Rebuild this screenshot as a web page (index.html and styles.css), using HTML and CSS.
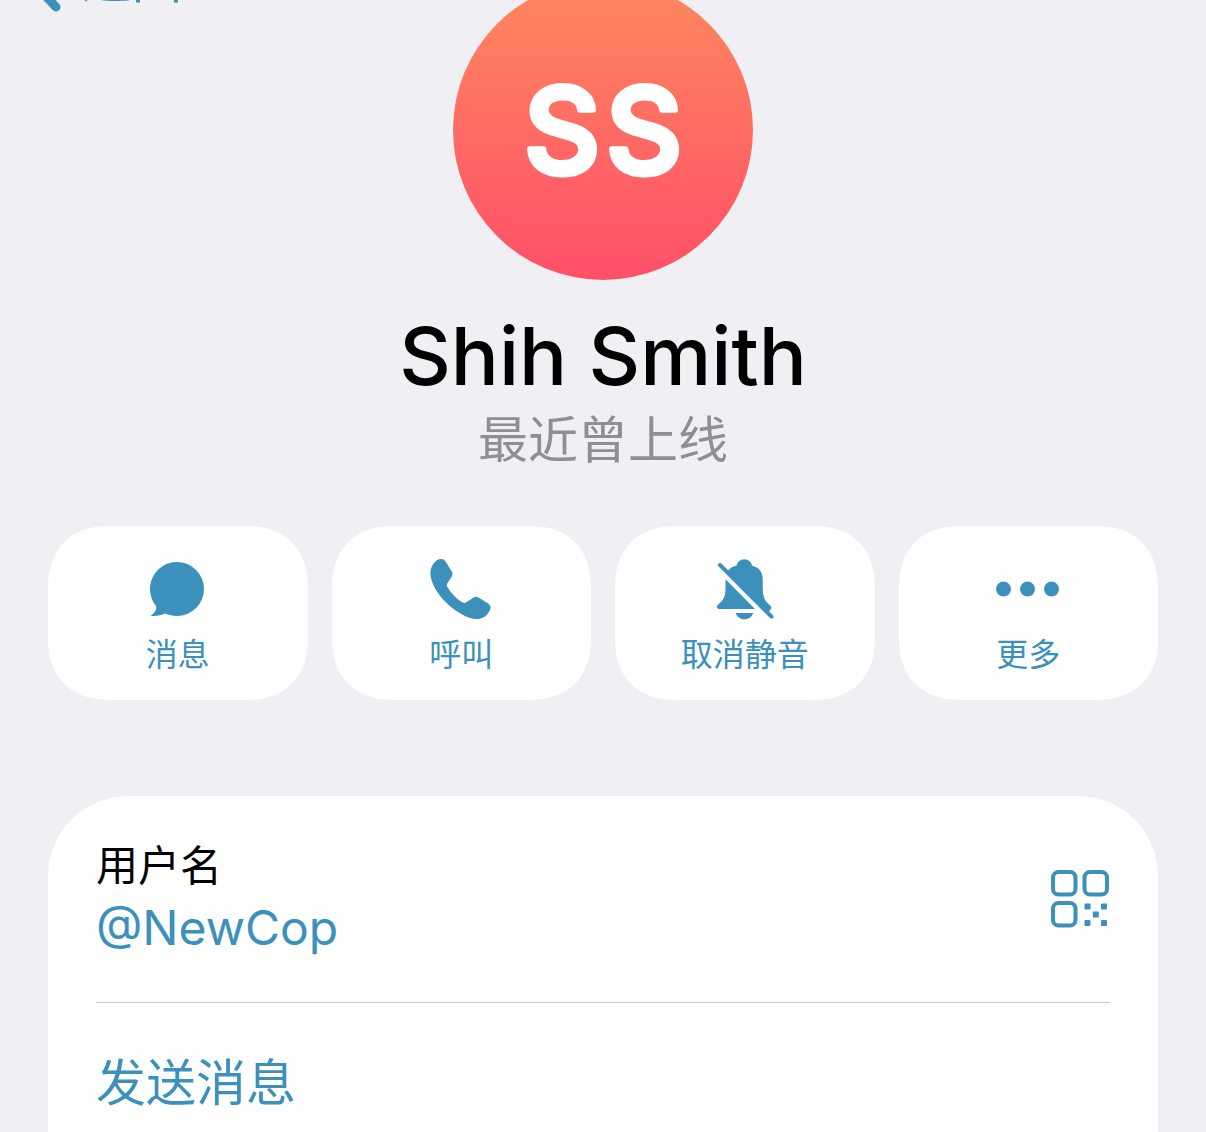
FILE: index.html
```html
<!DOCTYPE html>
<html lang="zh-CN">
<head>
  <meta charset="utf-8">
  <meta name="viewport" content="width=device-width, initial-scale=1">
  <title>Shih Smith</title>
  <link rel="stylesheet" href="styles.css">
</head>
<body>
  <a class="back" href="#">
    <svg class="back-icon" viewBox="0 0 40 72" aria-hidden="true"><path d="M32 8 4 37l28 30"/></svg>
    <span>返回</span>
  </a>

  <main class="page">
    <header class="profile">
      <svg class="avatar" viewBox="0 0 300 300" role="img" aria-label="SS">
        <defs>
          <linearGradient id="avatar-fill" x1="0" y1="0" x2="0" y2="1">
            <stop offset="0" stop-color="#ff885e"/>
            <stop offset="1" stop-color="#ff4f69"/>
          </linearGradient>
        </defs>
        <circle cx="150" cy="150" r="150" fill="url(#avatar-fill)"/>
        <text class="initials" x="109 191" y="193">SS</text>
      </svg>
      <h1 class="name">Shih Smith</h1>
      <p class="status">最近曾上线</p>
    </header>

    <nav class="actions">
      <button class="action" type="button">
        <svg class="action-icon" viewBox="0 0 64 64" aria-hidden="true">
          <path d="M31 4a27 27 0 1 1 0 54c-4 0-8-1-12-2.500-4.500 2-9 2.800-14.500 2.200 3.500-2 6.200-5 5.700-9.500A27 27 0 0 1 31 4Z"/>
        </svg>
        <span>消息</span>
      </button>
      <button class="action" type="button">
        <svg class="action-icon" viewBox="0 0 64 64" aria-hidden="true">
          <path d="M12.400 1c2 0 3.200 1 4.400 2.700l5.600 9.300c1.400 2.300 1.400 3.800.2 6L18.500 25c-1 1.600-1 2.800 0 4.300 3.500 6 8.500 11.200 14.700 15 1.600 1 2.800.9 4.400-.2l6.600-4.400c1.900-1.200 3.500-1.200 5.400-.2l9.200 5.700c2.800 1.800 3.400 3.900 2.200 6.500-3 6.700-7.700 9.300-13.600 9.300C39 61 26 53.500 16.500 44 8 35.500 1.400 24 1.400 15.300 1.400 8.500 6 1 12.400 1Z"/>
        </svg>
        <span>呼叫</span>
      </button>
      <button class="action" type="button">
        <svg class="action-icon" viewBox="0 0 64 64" aria-hidden="true">
          <path d="m14 14 2-2.500c2-2 4.500-3 7.500-3.700a7.900 7.900 0 0 1 15.600 0C46 9.500 49.700 14 49.700 21v8c0 8 1.300 13 5.300 16.500 2 1.700 3.300 2.700 3.300 4.300 0 1-.5 1.700-1.500 2.200l-1 3.500Z"/>
          <path d="M12.500 21.300 42 51H6.500c-2.800 0-3.500-2.700-1.500-4.300 6-4.700 7.500-9 7.500-16.700ZM22.600 55h17.600c-1.500 4-4.800 6.300-8.800 6.300s-7.300-2.300-8.800-6.300Z"/>
          <path class="slash" d="m7 7 51.500 51.700"/>
        </svg>
        <span>取消静音</span>
      </button>
      <button class="action" type="button">
        <svg class="action-icon" viewBox="0 0 64 64" aria-hidden="true">
          <circle cx="7.500" cy="31" r="7.500"/><circle cx="31.500" cy="31" r="7.500"/><circle cx="55.500" cy="31" r="7.500"/>
        </svg>
        <span>更多</span>
      </button>
    </nav>

    <section class="card">
      <div class="row">
        <dl class="field">
          <dt class="field-label">用户名</dt>
          <dd class="field-value"><a href="#">@NewCop</a></dd>
        </dl>
        <button class="qr" type="button" aria-label="二维码">
          <svg class="qr-icon" viewBox="0 0 60 60" aria-hidden="true">
            <g class="qr-frames">
              <rect x="3" y="4" width="22.500" height="22.500" rx="5.500"/>
              <rect x="34.500" y="4" width="22.500" height="22.500" rx="5.500"/>
              <rect x="3" y="35" width="22.500" height="22.500" rx="5.500"/>
            </g>
            <rect x="34.500" y="35.500" width="6" height="6" rx="1"/>
            <rect x="51" y="35.500" width="6" height="6" rx="1"/>
            <rect x="42.800" y="43.500" width="6" height="6" rx="1"/>
            <rect x="34.500" y="52" width="6" height="6" rx="1"/>
            <rect x="51" y="52" width="6" height="6" rx="1"/>
          </svg>
        </button>
      </div>
      <button class="send" type="button">发送消息</button>
    </section>
  </main>
</body>
</html>
```
FILE: styles.css
```css
:root {
  --accent: #3b90bc;
  --cjk: "Noto Sans CJK SC", sans-serif;
  --latin: Inter, "Noto Sans CJK SC", sans-serif;
}

* {
  box-sizing: border-box;
}

body {
  margin: 0;
  background: #efeff4;
  color: #000;
  font-family: var(--cjk);
}

a {
  color: inherit;
  text-decoration: none;
}

button {
  margin: 0;
  padding: 0;
  border: 0;
  background: none;
  color: var(--accent);
  font-family: inherit;
  cursor: pointer;
}

svg {
  display: block;
  overflow: visible;
  fill: currentColor;
}

/* The page is scrolled slightly: the back link is partly above the top edge */
.back {
  position: absolute;
  top: -60px;
  left: 24px;
  display: flex;
  align-items: center;
  gap: 18px;
  color: var(--accent);
  font-size: 50px;
  line-height: 72px;
}

.back-icon {
  width: 40px;
  height: 72px;
  fill: none;
  stroke: currentColor;
  stroke-width: 9px;
  stroke-linecap: round;
  stroke-linejoin: round;
}

.page {
  display: flex;
  flex-direction: column;
  min-height: 100vh;
  padding: 0 48px;
}

.profile {
  display: flex;
  flex-direction: column;
  align-items: center;
  margin-top: -20px;
}

.avatar {
  width: 300px;
  height: 300px;
}

.initials {
  fill: #fff;
  stroke: #fff;
  stroke-width: 6px;
  stroke-linejoin: round;
  font-family: var(--latin);
  font-size: 118px;
  font-weight: 500;
  text-anchor: middle;
}

.name {
  margin: 26px 0 0;
  font-family: var(--latin);
  font-size: 80px;
  font-weight: 500;
  line-height: 100px;
}

.status {
  margin: 0;
  color: #8e8e93;
  font-size: 50px;
  line-height: 60px;
}

.actions {
  display: grid;
  grid-template-columns: repeat(4, 1fr);
  gap: 24px;
  margin-top: 60px;
}

.action {
  display: flex;
  flex-direction: column;
  align-items: center;
  gap: 10px;
  padding: 32px 0 28px;
  border-radius: 56px;
  background: #fff;
  font-size: 32px;
  line-height: 40px;
}

.action-icon {
  width: 64px;
  height: 64px;
}

.slash {
  fill: none;
  stroke: currentColor;
  stroke-width: 4px;
  stroke-linecap: round;
}

.card {
  display: flex;
  flex: 1;
  flex-direction: column;
  margin-top: 96px;
  padding: 0 48px;
  border-radius: 80px 80px 0 0;
  background: #fff;
}

.row {
  display: flex;
  align-items: center;
  justify-content: space-between;
  padding: 39px 0 42px;
  border-bottom: 1px solid #c8c7cc;
}

.field {
  display: flex;
  flex-direction: column;
  gap: 5px;
  margin: 0;
}

.field-label {
  font-size: 42px;
  line-height: 56px;
}

.field-value {
  margin: 0;
  color: var(--accent);
  font-family: var(--latin);
  font-size: 48px;
  line-height: 64px;
}

.qr-icon {
  width: 60px;
  height: 60px;
}

.qr-frames {
  fill: none;
  stroke: currentColor;
  stroke-width: 4px;
}

.send {
  padding: 44px 0 16px;
  font-size: 50px;
  line-height: 64px;
  text-align: left;
}

@supports (corner-shape: squircle) {
  .action {
    border-radius: 62px;
    corner-shape: superellipse(1.2);
  }
}
```
